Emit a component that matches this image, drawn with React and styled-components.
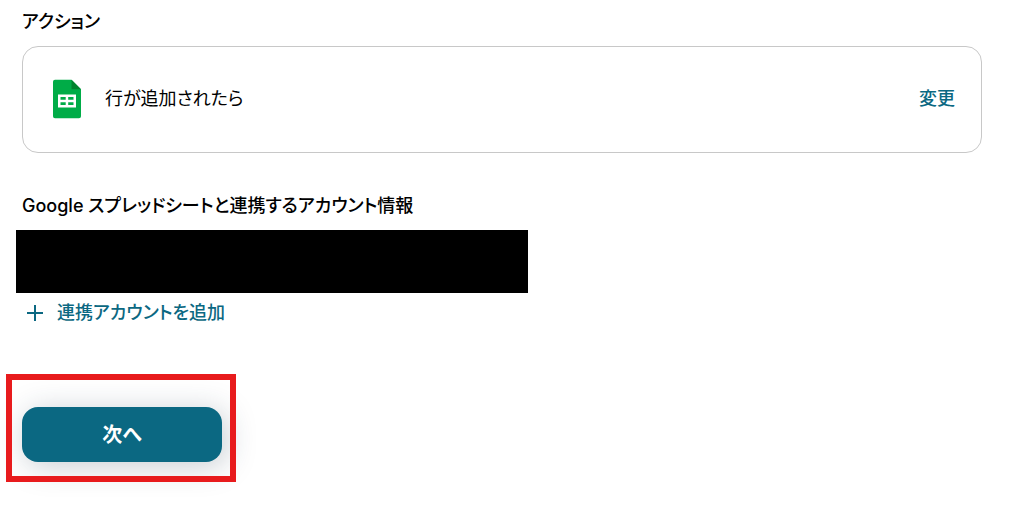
import React from "react";
import styled, { createGlobalStyle } from "styled-components";

const GlobalStyle = createGlobalStyle`
  *, *::before, *::after { box-sizing: border-box; }
  body {
    margin: 0;
    background: #fff;
    color: #000;
    font-family: Inter, "Noto Sans CJK JP", sans-serif;
    font-size: 18px;
    line-height: 24px;
    font-feature-settings: "palt";
  }
`;

const Page = styled.main`
  display: flex;
  flex-direction: column;
  padding: 11px 30px 32px 22px;
`;

const Section = styled.section`
  display: flex;
  flex-direction: column;
  gap: 13px;
  margin-bottom: 42px;
`;

const Heading = styled.h2`
  margin: 0;
  font-size: 18px;
  line-height: 22px;
  font-weight: 500;
`;

const Card = styled.div`
  display: flex;
  align-items: center;
  gap: 24px;
  padding: 32px 26px 33px 30px;
  border: 1px solid #c8c8c8;
  border-radius: 16px;
`;

const CardLabel = styled.span`
  flex: 1;
`;

const TextButton = styled.button`
  display: inline-flex;
  align-items: center;
  gap: 14px;
  padding: 0;
  border: 0;
  background: none;
  color: #0b6882;
  font: inherit;
  font-feature-settings: inherit;
  font-weight: 500;
  cursor: pointer;
`;

const AccountBlock = styled.div`
  display: flex;
  flex-direction: column;
  gap: 8px;
  margin-left: -6px;
`;

const Redacted = styled.div`
  width: 100%;
  max-width: 512px;
  height: 63px;
  background: #000;
`;

const AddRow = styled.div`
  display: flex;
  padding-left: 11px;
`;

const Highlight = styled.div`
  position: relative;
  align-self: flex-start;
  margin: 7px 0 0 -16px;
  padding: 33px 14px 20px 16px;

  &::after {
    content: "";
    position: absolute;
    inset: 0;
    border: 6px solid #e81b1d;
    pointer-events: none;
  }
`;

const PrimaryButton = styled.button`
  display: block;
  min-width: 200px;
  padding: 14px 24px 13px;
  border: 0;
  border-radius: 16px;
  background: #0b6882;
  color: #fff;
  font: inherit;
  font-feature-settings: inherit;
  font-size: 20px;
  line-height: 28px;
  font-weight: 700;
  box-shadow: 4px 4px 30px rgba(30, 55, 75, 0.25);
  cursor: pointer;
`;

function SheetsIcon() {
  return (
    <svg width="28" height="40" viewBox="0 0 28 40" aria-hidden="true">
      <path d="M2 0.700H18.500L28 10.200V37.300a2 2 0 0 1-2 2H2a2 2 0 0 1-2-2V2.700a2 2 0 0 1 2-2Z" fill="#00ac47" />
      <path d="M18.500 0.700L28 10.200H18.500Z" fill="#00832d" />
      <path
        fillRule="evenodd"
        fill="#fff"
        d="M5 15.500H23V28.500H5ZM7.500 18V20.700H12.700V18ZM15.200 18V20.700H20.500V18ZM7.500 23.200V26H12.700V23.200ZM15.200 23.200V26H20.500V23.200Z"
      />
    </svg>
  );
}

function PlusIcon() {
  return (
    <svg width="16" height="16" viewBox="0 0 16 16" aria-hidden="true">
      <path d="M8 0V16M0 8H16" stroke="currentColor" strokeWidth="2" />
    </svg>
  );
}

export default function App() {
  return (
    <>
      <GlobalStyle />
      <Page>
        <Section>
          <Heading>アクション</Heading>
          <Card>
            <SheetsIcon />
            <CardLabel>行が追加されたら</CardLabel>
            <TextButton type="button">変更</TextButton>
          </Card>
        </Section>
        <Section>
          <Heading>Google スプレッドシートと連携するアカウント情報</Heading>
          <AccountBlock>
            <Redacted />
            <AddRow>
              <TextButton type="button">
                <PlusIcon />
                連携アカウントを追加
              </TextButton>
            </AddRow>
          </AccountBlock>
        </Section>
        <Highlight>
          <PrimaryButton type="button">次へ</PrimaryButton>
        </Highlight>
      </Page>
    </>
  );
}
